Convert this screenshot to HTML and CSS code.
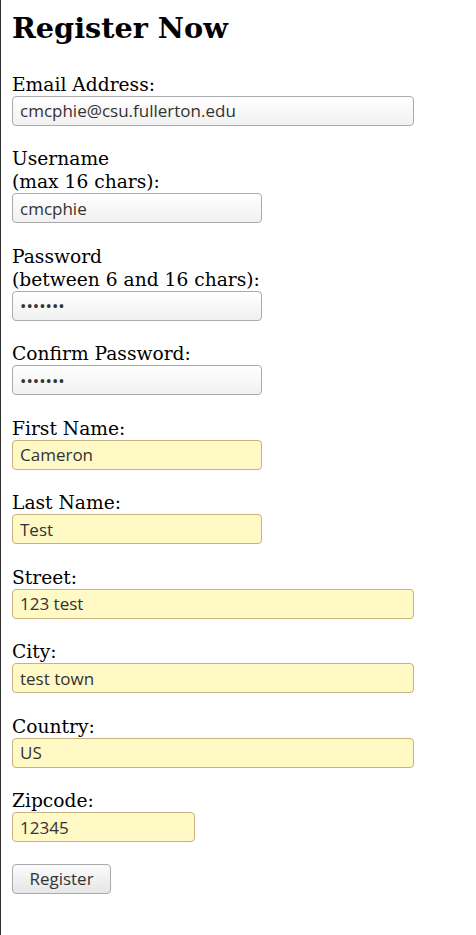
FILE: index.html
```html
<!DOCTYPE html>
<html>
<head>
<meta charset="utf-8">
<title>Register Now</title>
<link rel="stylesheet" href="styles.css">
</head>
<body>
<div class="page">
  <h1 class="title">Register Now</h1>
  <form class="form">
    <div class="field">
      <label class="label">Email Address:</label>
      <input class="input input-wide" type="text" value="cmcphie@csu.fullerton.edu">
    </div>
    <div class="field">
      <label class="label">Username<br>(max 16 chars):</label>
      <input class="input input-mid" type="text" value="cmcphie">
    </div>
    <div class="field">
      <label class="label">Password<br>(between 6 and 16 chars):</label>
      <input class="input input-mid" type="password" value="1234567">
    </div>
    <div class="field">
      <label class="label">Confirm Password:</label>
      <input class="input input-mid" type="password" value="1234567">
    </div>
    <div class="field">
      <label class="label">First Name:</label>
      <input class="input input-mid filled" type="text" value="Cameron">
    </div>
    <div class="field">
      <label class="label">Last Name:</label>
      <input class="input input-mid filled" type="text" value="Test">
    </div>
    <div class="field">
      <label class="label">Street:</label>
      <input class="input input-wide filled" type="text" value="123 test">
    </div>
    <div class="field">
      <label class="label">City:</label>
      <input class="input input-wide filled" type="text" value="test town">
    </div>
    <div class="field">
      <label class="label">Country:</label>
      <input class="input input-wide filled" type="text" value="US">
    </div>
    <div class="field">
      <label class="label">Zipcode:</label>
      <input class="input input-short filled" type="text" value="12345">
    </div>
    <div class="actions">
      <button class="button" type="button">Register</button>
    </div>
  </form>
</div>
</body>
</html>
```
FILE: styles.css
```css
html, body {
  margin: 0;
  padding: 0;
  background: #ffffff;
}
.page {
  box-sizing: border-box;
  min-height: 100vh;
  border-left: 1px solid #2e2e2e;
  padding: 12px 0 0 11px;
  font-family: "DejaVu Serif", serif;
  color: #000;
}
.title {
  margin: 0;
  font-size: 28.7px;
  font-weight: bold;
  line-height: 33px;
}
.form {
  display: flex;
  flex-direction: column;
  margin-top: 27.5px;
}
.field {
  display: flex;
  flex-direction: column;
  align-items: flex-start;
  margin-bottom: 21.5px;
}
.label {
  font-size: 18.67px;
  line-height: 23px;
}
.input {
  box-sizing: border-box;
  height: 30px;
  margin: 0;
  padding: 0 7px;
  border: 1px solid #ababab;
  border-radius: 4px;
  background: linear-gradient(#ffffff, #f1f1f1);
  font-family: "Open Sans", "DejaVu Sans", sans-serif;
  font-size: 17px;
  color: #333;
  outline: none;
}
.input-wide { width: 402px; }
.input-mid { width: 250px; }
.input-short { width: 183px; }
.filled {
  background: #fff9c6;
  border-color: #c8b27e;
}
.actions {
  display: flex;
}
.button {
  box-sizing: border-box;
  width: 99px;
  height: 30px;
  margin: 0;
  padding: 0;
  border: 1px solid #aaaaaa;
  border-radius: 4px;
  background: linear-gradient(#fbfbfb, #e6e6e6);
  font-family: "Open Sans", "DejaVu Sans", sans-serif;
  font-size: 17px;
  color: #333;
}
```
